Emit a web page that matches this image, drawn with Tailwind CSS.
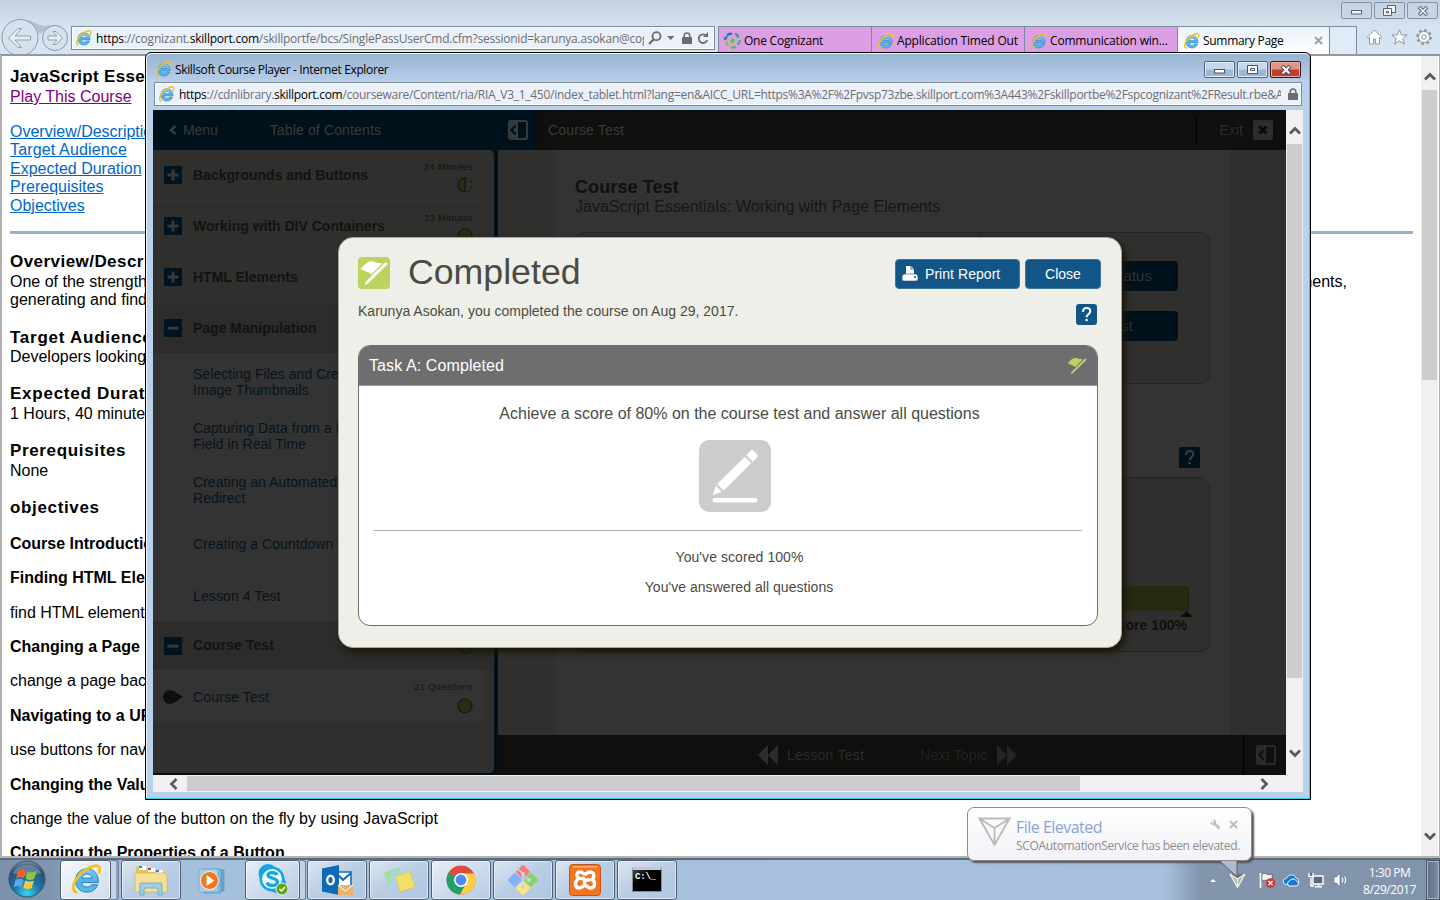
<!DOCTYPE html>
<html lang="en">
<head>
<meta charset="utf-8">
<title>Summary Page</title>
<script src="https://cdn.jsdelivr.net/npm/@tailwindcss/browser@4"></script>
</head>
<body class="overflow-hidden bg-white font-['Liberation_Sans',Arial,sans-serif]">
<svg class="absolute h-0 w-0">
  <defs>
    <linearGradient id="eblue" x1="0" y1="0" x2="0" y2="1"><stop offset="0" stop-color="#7fd0f5"/><stop offset=".5" stop-color="#4fb4ea"/><stop offset="1" stop-color="#5cb8ea"/></linearGradient>
    <symbol id="ie" viewBox="0 0 16 16">
      <path d="M14.6 9.9H5.700c.1 1.500 1.300 2.400 2.900 2.400 1 0 1.800-.4 2.300-1.200h3.300c-.9 2.500-3 3.900-5.700 3.900-3.700 0-6.100-2.500-6.100-6.100s2.500-6.300 6.100-6.300c3.800 0 6.200 2.800 6.100 7.300zM5.800 7.500h5.500c-.2-1.300-1.200-2.200-2.700-2.200S6 6.200 5.800 7.500z" fill="url(#eblue)" stroke="#2678b8" stroke-width=".5"/>
      <path d="M2.700 15C-.6 13.800 2 7.500 7 3.700 10.700.9 14.900-.3 15.300 2.300c.1.700 0 1.300-.3 2" fill="none" stroke="#f4c01c" stroke-width="1.500" stroke-linecap="round"/>
    </symbol>
    <symbol id="panel" viewBox="0 0 20 20">
      <path fill="currentColor" fill-rule="evenodd" d="M2.500 0h15A2.500 2.500 0 0 1 20 2.500v15a2.500 2.500 0 0 1-2.500 2.500h-15A2.500 2.500 0 0 1 0 17.500v-15A2.500 2.500 0 0 1 2.500 0zM10 2v16h8V2zM6.700 4.800 2 10l4.700 5.200 1.600-1.500L5 10l3.300-3.700z"/>
    </symbol>
    <symbol id="plus" viewBox="0 0 18 18"><rect width="18" height="18" rx="1" fill="#00131f"/><path d="M9 3.500v11M3.500 9h11" stroke="#343a3b" stroke-width="3"/></symbol>
    <symbol id="minus" viewBox="0 0 18 18"><rect width="18" height="18" rx="1" fill="#00131f"/><path d="M3.500 9.200h11" stroke="#343a3b" stroke-width="3"/></symbol>
    <symbol id="lock" viewBox="0 0 10 12"><path d="M2.200 6V3.800a2.800 2.800 0 0 1 5.600 0V6" fill="none" stroke="currentColor" stroke-width="1.500"/><rect y="5" width="10" height="7" rx=".8" fill="currentColor"/></symbol>
    <symbol id="flag" viewBox="0 0 32 32"><path d="M2.500 12C6.500 8.500 9.500 3.500 14.500 4.500c3 .6 6 2.300 10 1.700L13.500 17.500C10 14.500 6.500 14.500 2.500 12z" fill="currentColor"/><path d="M8.500 26 28 6.800" stroke="currentColor" stroke-width="3" stroke-linecap="round"/></symbol>
    <symbol id="qm" viewBox="0 0 21 21"><path d="M7 8c0-2.700 1.500-4 3.600-4s3.700 1.200 3.700 3.200c0 3-3.700 3.200-3.700 6.100" fill="none" stroke="currentColor" stroke-width="2"/><rect x="9.500" y="14.900" width="2.200" height="2.200" fill="currentColor"/></symbol>
    <symbol id="chev" viewBox="0 0 12 12"><path d="M1 8.500 6 3.500l5 5" fill="none" stroke="#5b5b5b" stroke-width="2.800"/></symbol>
  </defs>
</svg>

<div class="relative flex h-[900px] w-[1440px] flex-col overflow-hidden">

  <!-- browser chrome -->
  <header class="flex h-[54px] shrink-0 bg-linear-to-b from-[#c2cfdd] via-[#d5e2f0] to-[#d7e5f3]">
    <svg class="h-[54px] w-[70px] shrink-0" viewBox="0 0 70 54" fill="none">
      <path d="M27 20c8 1 12 8 24 5L40 34z" fill="#b4c0cc"/>
      <circle cx="20" cy="37.500" r="18" fill="#d5e2ee" stroke="#8a99a8"/>
      <circle cx="55" cy="38" r="12.500" fill="#d5e2ee" stroke="#8a99a8"/>
      <path d="m8.500 38 9.500-9.500 3.500 0-6.500 7.500h15.500v4H15l6.500 7.500H18z" stroke="#8f9dab" fill="#e6eef6"/>
      <path d="m62.500 38-6.500-6.500h-3l4 4.500H48v4h9l-4 4.500h3z" stroke="#8f9dab" fill="#e6eef6"/>
    </svg>
    <div class="mt-[26px] ml-px flex h-[24px] w-[644px] shrink-0 items-center border border-[#7c8b9c] bg-[#eaf1fb] pl-[3px] font-['Open_Sans',sans-serif] text-[12px] text-[#6e6e6e] outline-1 -outline-offset-2 outline-white">
      <svg class="h-4 w-[17px] shrink-0"><use href="#ie"/></svg>
      <div class="mt-px ml-1 w-[548px] shrink-0 overflow-hidden tracking-[-0.23px] whitespace-nowrap"><span class="text-black">https</span>://cognizant.<span class="text-black">skillport.com</span>/skillportfe/bcs/SinglePassUserCmd.cfm?sessionid=karunya.asokan@cog</div>
      <svg class="ml-[4px] h-[14px] w-[14px] shrink-0" viewBox="0 0 14 14" fill="none" stroke="#6c6c6c"><circle cx="8.500" cy="5.200" r="4" stroke-width="1.800"/><path d="M5.500 8.500 1 13" stroke-width="2.200"/></svg>
      <svg class="ml-[5px] h-1 w-2 shrink-0" viewBox="0 0 8 4"><path d="M0 0h7.500L3.700 4z" fill="#6c6c6c"/></svg>
      <svg class="ml-[7px] h-3 w-[10px] shrink-0 text-[#6c6c6c]"><use href="#lock"/></svg>
      <svg class="ml-[5px] h-[13px] w-[12px] shrink-0" viewBox="0 0 12 13" fill="none"><path d="M9.300 3.800A4.300 4.300 0 1 0 10.200 8" stroke="#6c6c6c" stroke-width="1.800"/><path d="M6 5h5V0z" fill="#6c6c6c"/></svg>
    </div>
    <nav class="mt-[26px] ml-[3px] flex h-[28px] shrink-0 border-t border-[#7c8b9c] font-['Open_Sans',sans-serif] text-[12px] tracking-[-0.24px] whitespace-nowrap text-black">
      <div class="flex w-[153px] items-center border-l border-[#7c8b9c] bg-[#dd9fe3] pl-[5px]">
        <svg class="h-[17px] w-[17px]" viewBox="0 0 17 17" fill="none" stroke-width="2.400"><circle cx="8.500" cy="8.800" r="2.400" fill="#6cc04a"/><path d="M3 3.500c2-2 4-2 5-1" stroke="#1b78a8"/><path d="M11 2c2 0 3 2 3 3.500" stroke="#28a29a"/><path d="M15.500 8c.5 2-1 4-2 4.500" stroke="#2fb59a"/><path d="M12 14.500c-2 1.500-4 1-5 .5" stroke="#5cb947"/><path d="M4.500 13.500c-2-1-2-3-1.500-4.500" stroke="#7ec350"/><path d="M1 8c0-2 1-3 2.500-3" stroke="#2384b4"/></svg>
        <span class="ml-[3px]">One Cognizant</span></div>
      <div class="flex w-[153px] items-center border-l border-[#7c8b9c] bg-[#dd9fe3] pl-[5px]"><svg class="h-4 w-[17px]"><use href="#ie"/></svg><span class="ml-[3px] tracking-[-0.18px]">Application Timed Out</span></div>
      <div class="flex w-[153px] items-center border-l border-[#7c8b9c] bg-[#dd9fe3] pl-[5px]"><svg class="h-4 w-[17px]"><use href="#ie"/></svg><span class="ml-[3px] tracking-[-0.18px]">Communication win...</span></div>
      <div class="flex w-[153px] items-center border-x border-[#7c8b9c] bg-linear-to-b from-[#eaf2fa] to-white pl-[5px]"><svg class="h-4 w-[17px]"><use href="#ie"/></svg><span class="ml-[3px] tracking-[-0.3px]">Summary Page</span>
        <svg class="mr-[6px] ml-auto h-[9px] w-[9px]" viewBox="0 0 9 9"><path d="m1 1 7 7M8 1 1 8" stroke="#a0a0a0" stroke-width="2"/></svg></div>
      <div class="w-[27px] border-r border-[#7c8b9c] bg-[#e0ebf8]"></div>
    </nav>
    <div class="flex grow flex-col">
      <div class="-ml-4 mt-[2px] flex h-[17px] gap-[2px]">
        <div class="flex w-[31px] items-center justify-center rounded-[2px] border border-[#8493a8] bg-[#c6d4e4]"><svg class="h-2 w-3" viewBox="0 0 12 8"><rect x=".5" y="3.500" width="10" height="3.500" fill="#f4f4f4" stroke="#5b6273"/></svg></div>
        <div class="flex w-[31px] items-center justify-center rounded-[2px] border border-[#8493a8] bg-[#c6d4e4]"><svg class="h-3 w-[13px]" viewBox="0 0 13 12" fill="#f4f4f4" stroke="#5b6273"><path d="M4.500.5h8v7h-8z"/><path d="M.5 3.500h8v7h-8z"/><path d="M3.500 6.500h2v1.500h-2z"/></svg></div>
        <div class="flex w-[31px] items-center justify-center rounded-[2px] border border-[#8493a8] bg-[#c6d4e4]"><svg class="h-[10px] w-3" viewBox="0 0 12 10"><path d="m2 1 8 8M10 1 2 9" stroke="#5b6273" stroke-width="3.600"/><path d="m2.500 1.500 7 7M9.500 1.500l-7 7" stroke="#f4f4f4" stroke-width="1.700"/></svg></div>
      </div>
      <div class="mt-[10px] ml-[9px] flex gap-[8px]">
        <svg class="h-4 w-[17px]" viewBox="0 0 17 16" fill="#fff" stroke="#8e969e"><path d="M1 8.500 8.500 1 16 8.500l-1 1-1.500-1v6.500h-4v-5h-2v5h-4V8.500L2 9.500z"/></svg>
        <svg class="h-4 w-[17px]" viewBox="0 0 17 16" fill="#fff" stroke="#8e969e"><path d="m8.500.8 2 5.200h5.700l-4.500 3.500 1.700 5.700-4.900-3.400-4.900 3.400 1.700-5.700L.8 6h5.700z"/></svg>
        <svg class="h-4 w-[16px]" viewBox="0 0 16 16" fill="none"><circle cx="8" cy="8" r="6.600" stroke="#8e969e" stroke-width="2.600" stroke-dasharray="2.600 2.580"/><circle cx="8" cy="8" r="5.500" fill="#fff" stroke="#8e969e"/><circle cx="8" cy="8" r="2.300" stroke="#8e969e"/></svg>
      </div>
    </div>
  </header>

  <!-- page behind the popup -->
  <main class="flex h-[804px] shrink-0 overflow-hidden border-t-2 border-b-2 border-l-2 border-t-[#8f99a4] border-b-[#b4b4b4] border-l-[#b0b0b0] bg-white">
    <div class="flex w-[1419px] flex-col pl-2 text-[16px] leading-[18px] whitespace-nowrap text-black *:shrink-0">
      <p class="mt-[12px] text-[17px] font-bold tracking-[0.3px]">JavaScript Essentials: Working with Page Elements</p>
      <a class="mt-[2px] text-[#800080] underline">Play This Course</a>
      <a class="mt-[17px] text-[#0066cc] underline">Overview/Description</a>
      <a class="tracking-[0.15px] text-[#0066cc] underline">Target Audience</a>
      <a class="mt-px text-[#0066cc] underline">Expected Duration</a>
      <a class="text-[#0066cc] underline">Prerequisites</a>
      <a class="mt-px text-[#0066cc] underline">Objectives</a>
      <div class="mt-[16px] h-[3px] w-[1403px] bg-[#8db3d9]"></div>
      <p class="mt-[19px] text-[17px] font-bold tracking-[0.45px]">Overview/Description</p>
      <div class="mt-[2px] flex w-[1337px] justify-between"><span>One of the strengths of JavaScript</span><span>page elements,</span></div>
      <p>generating and finding elements</p>
      <p class="mt-[20px] text-[17px] font-bold tracking-[0.75px]">Target Audience</p>
      <p class="mt-px">Developers looking to learn</p>
      <p class="mt-[19px] text-[17px] font-bold tracking-[0.75px]">Expected Duration</p>
      <p class="mt-[2px]">1 Hours, 40 minutes</p>
      <p class="mt-[19px] text-[17px] font-bold tracking-[0.65px]">Prerequisites</p>
      <p class="mt-[2px]">None</p>
      <p class="mt-[19px] text-[17px] font-bold tracking-[0.65px]">objectives</p>
      <p class="mt-[18px] font-bold">Course Introduction</p>
      <p class="mt-[16px] font-bold">Finding HTML Elements</p>
      <p class="mt-[17px]">find HTML elements</p>
      <p class="mt-[16px] font-bold">Changing a Page Background</p>
      <p class="mt-[16px]">change a page background</p>
      <p class="mt-[17px] font-bold">Navigating to a URL</p>
      <p class="mt-[16px]">use buttons for navigation</p>
      <p class="mt-[17px] font-bold">Changing the Value</p>
      <p class="mt-[16px]">change the value of the button on the fly by using JavaScript</p>
      <p class="mt-[16px] font-bold">Changing the Properties of a Button</p>
    </div>
    <div class="flex w-[17px] flex-col items-center bg-[#f0f0f0]">
      <svg class="mt-[15px] h-3 w-3"><use href="#chev"/></svg>
      <div class="mt-[7px] h-[290px] w-[15px] bg-[#cdcdcd]"></div>
      <svg class="mt-auto mb-[14px] h-3 w-3 rotate-180"><use href="#chev"/></svg>
    </div>
    <div class="w-[2px] border-r border-[#b0b0b0]"></div>
  </main>

  <!-- taskbar -->
  <footer class="flex h-[42px] shrink-0 items-stretch border-t-2 border-[#5c6b7d] bg-[linear-gradient(90deg,#7c90a9_0px,#7f95af_50px,#a6bfdb_120px,#a7c0dc_1165px,#8295ad_1200px,#8194ac_1440px)] *:shrink-0">
    <svg class="ml-[8px] h-[38px] w-[38px]" viewBox="0 0 38 38">
      <defs><radialGradient id="orb" cx=".5" cy=".9" r=".9"><stop offset="0" stop-color="#38d5f2"/><stop offset=".4" stop-color="#1878a8"/><stop offset=".8" stop-color="#2d4f72"/><stop offset="1" stop-color="#7e97ad"/></radialGradient></defs>
      <circle cx="19" cy="19" r="18" fill="url(#orb)" stroke="#35516c"/>
      <path d="M5 13a15 12 0 0 1 28 0q-14 6-28 0z" fill="#fff" opacity=".25"/>
      <path d="M10.500 10.500c3-1.500 5-1 7.500.3l-2 7.500c-2.500-1.500-5-1.500-8-.3z" fill="#f0602a"/><path d="M19.500 11.500c3 1.300 6 1 9-.4l-2.300 8c-3 1.300-5.800 1.200-8.600-.3z" fill="#8fc443"/><path d="M7.600 19.500c3-1.200 5.500-1 8 .4l-2 7.500c-2.500-1.300-5.400-1.400-8-.4z" fill="#5aa7e8"/><path d="M17.200 20.500c3 1.300 5.700 1.300 8.600.2l-2.100 7.600c-3 1.200-5.600 1-8.500-.3z" fill="#fbc934"/>
    </svg>
    <div class="ml-[14px] flex w-[51px] items-center justify-center rounded-[3px] border border-[#4c5b70] bg-linear-to-br from-[#f5f9fc] to-[#cfdded] shadow-[inset_0_0_0_1px_#ffffffcc]"><svg class="-mt-[2px] h-[30px] w-[30px]"><use href="#ie"/></svg></div>
    <div class="w-[8px] rounded-r-[3px] border border-l-0 border-[#6f819a] bg-[#c5d5e7] shadow-[inset_-3px_0_0_-1px_#8ea3bd]"></div>
    <div class="ml-[2px] flex w-[60px] items-center justify-center rounded-[3px] border border-[#4f6078] bg-linear-to-br from-[#dce6f1] via-[#bacde3] to-[#b0c7e0] shadow-[inset_0_0_0_1px_#ffffff80]">
      <svg class="h-[32px] w-[34px]" viewBox="0 0 34 32"><path d="M2 5V3h9l1 2h7l1 1h7l1 2h4v20H2z" fill="#e2c566"/><path d="M5 2h7v4H5zM14 4h7v4h-7zM22 6h7v4h-7z" fill="#fff"/><path d="M5 2h3v2H5z" fill="#36a13b"/><path d="M14 4h3v2h-3z" fill="#d23b30"/><path d="M22 6h3v2h-3z" fill="#3a85cf"/><path d="M1 9h30l2 2v16l-2 1H3L1 26z" fill="#f3df95" stroke="#d0b45c" stroke-width=".7"/><path d="M6 31V20q0-1 1-1h20q1 0 1 1v11h-4v-5q0-2-2-2H12q-2 0-2 2v5z" fill="#9bcfe9" stroke="#5d9fc4" stroke-width=".7"/></svg></div>
    <div class="flex w-[64px] items-center justify-center">
      <svg class="mt-[2px] h-[26px] w-[30px]" viewBox="0 0 30 26"><path d="M8 2h18v21H8z" fill="#6ba6cf" stroke="#4b8ebb" stroke-width=".6"/><path d="M6 1h17v24H6z" fill="#86bbde" stroke="#4b8ebb" stroke-width=".6"/><path d="M1 1h19v23H1z" fill="#a5cfe8" stroke="#5c9dc6" stroke-width=".6"/><circle cx="11.500" cy="12.500" r="9" fill="#f1771c" stroke="#fff" stroke-width=".8"/><path d="M8.500 7v11l8-5.500z" fill="#fff"/></svg></div>
    <div class="flex w-[55px] items-center justify-center rounded-[3px] border border-[#4f6078] bg-linear-to-br from-[#e6eef6] to-[#b6cbe2] shadow-[inset_0_0_0_1px_#ffffff80]">
      <svg class="h-[32px] w-[32px]" viewBox="0 0 32 32"><circle cx="11" cy="9.500" r="9.500" fill="#16a5e4"/><circle cx="20" cy="20" r="9" fill="#16a5e4"/><circle cx="15" cy="15" r="12.500" fill="#16a5e4"/><circle cx="15" cy="15" r="10" fill="#e9f6fd"/><path d="M20 11c-1-3-9-3.500-9 0 0 4 9.500 2.500 9.500 7 0 4.500-9.500 4.500-10.500.5" fill="none" stroke="#16a5e4" stroke-width="3.200"/><circle cx="25" cy="25" r="6" fill="#5aaa14" stroke="#e7f0f7"/><path d="m22.500 25 2 2 3.500-4" fill="none" stroke="#fff" stroke-width="1.500"/></svg></div>
    <div class="w-[6px] rounded-r-[3px] border border-l-0 border-[#6f819a] bg-[#c0d2e6]"></div>
    <div class="ml-px flex w-[60px] items-center justify-center rounded-[3px] border border-[#4f6078] bg-linear-to-br from-[#dce6f1] via-[#bacde3] to-[#b0c7e0] shadow-[inset_0_0_0_1px_#ffffff80]">
      <svg class="h-[32px] w-[32px]" viewBox="0 0 32 32"><path d="M14 8h16v14H14z" fill="#fff" stroke="#0b6ab8" stroke-width="1.500"/><path d="m17 11 5 5 8-7" fill="none" stroke="#0b6ab8" stroke-width="2"/><path d="M1 4.500 18 1v30L1 27.500z" fill="#0b6ab8"/><ellipse cx="9.500" cy="16" rx="3.300" ry="4.300" fill="none" stroke="#fff" stroke-width="2.400"/><path d="M17 21h15v10H17z" fill="#e9b36f"/><path d="m17 21 7.500 6 7.500-6" fill="none" stroke="#fff"/></svg></div>
    <div class="ml-[2px] flex w-[60px] items-center justify-center rounded-[3px] border border-[#4f6078] bg-linear-to-br from-[#dce6f1] via-[#bacde3] to-[#b0c7e0] shadow-[inset_0_0_0_1px_#ffffff80]">
      <svg class="h-[28px] w-[32px]" viewBox="0 0 32 28"><path d="m1 7 15-6 5 14-15 6z" fill="#a5dca0"/><path d="m9 6 14 1-1 16-15-2z" fill="#a9d3f3"/><path d="m12 10 15-4 5 15-15 5z" fill="#f3df67" stroke="#d9c24c" stroke-width=".6"/></svg></div>
    <div class="ml-[2px] flex w-[60px] items-center justify-center rounded-[3px] border border-[#4f6078] bg-linear-to-br from-[#e6eef6] to-[#b6cbe2] shadow-[inset_0_0_0_1px_#ffffff80]">
      <svg class="h-[30px] w-[30px]" viewBox="0 0 30 30"><circle cx="15" cy="15" r="14.500" fill="#dd4b3e"/><path d="M15 15 2.500 7.700A14.500 14.500 0 0 0 14 29.500l6-11z" fill="#1ea362"/><path d="M15 8.500h13a14.500 14.500 0 0 1-14 21l6-11z" fill="#ffcd46"/><circle cx="15" cy="15" r="7" fill="#fff"/><circle cx="15" cy="15" r="5.400" fill="#4c8bf5"/></svg></div>
    <div class="ml-[2px] flex w-[60px] items-center justify-center rounded-[3px] border border-[#4f6078] bg-linear-to-br from-[#dce6f1] via-[#bacde3] to-[#b0c7e0] shadow-[inset_0_0_0_1px_#ffffff80]">
      <svg class="h-[32px] w-[32px]" viewBox="0 0 32 32"><g transform="rotate(45 16 16)"><rect x="5" y="5" width="10.500" height="10.500" rx="1.500" fill="#f87a7a"/><rect x="16.500" y="5" width="10.500" height="10.500" rx="1.500" fill="#8bd25f"/><rect x="5" y="16.500" width="10.500" height="10.500" rx="1.500" fill="#7fb2ff"/><rect x="16.500" y="16.500" width="10.500" height="10.500" rx="1.500" fill="#ffe578"/></g><path d="m11 5 5 5v14M16 11l6 5" fill="none" stroke="#c5d6e8" stroke-width="1.600"/><circle cx="16" cy="23" r="2" fill="#c5d6e8"/><circle cx="22" cy="16" r="2" fill="#c5d6e8"/><circle cx="16" cy="10" r="2" fill="#c5d6e8"/></svg></div>
    <div class="ml-[2px] flex w-[60px] items-center justify-center rounded-[3px] border border-[#4f6078] bg-linear-to-br from-[#dce6f1] via-[#bacde3] to-[#b0c7e0] shadow-[inset_0_0_0_1px_#ffffff80]">
      <svg class="h-[32px] w-[32px]" viewBox="0 0 32 32"><rect x=".5" y=".5" width="31" height="31" rx="3" fill="#f37521" stroke="#c9550f"/><path d="M4 2h24v1.500H4z" fill="#fbb07a"/><path d="M16 14.500h-4c-5 0-5.500-6-1.500-6.500 3-.4 3.500 2 5.500 2s2.500-2.400 5.500-2c4 .5 4.500 6 1 7.500 4.500 1.500 4 8.500-1 8.500-3 0-3.500-2.500-5.500-2.500s-2.500 2.500-5.500 2.500c-5 0-5.500-7-1-8.500M20.500 16h-5v4" fill="none" stroke="#fff" stroke-width="3.400"/></svg></div>
    <div class="ml-[2px] flex w-[60px] items-center justify-center rounded-[3px] border border-[#4f6078] bg-linear-to-br from-[#dce6f1] via-[#bacde3] to-[#b0c7e0] shadow-[inset_0_0_0_1px_#ffffff80]">
      <div class="-mt-px flex h-[25px] w-[30px] flex-col border border-t-[3px] border-[#8b8b8b] border-t-[#bfc9d0] bg-linear-to-br from-[#444] to-black to-50% pt-[2px] pl-[2px] font-['Liberation_Mono',monospace] text-[9px] leading-[11px] font-bold tracking-[-0.2px] text-white">C:\_</div></div>

    <!-- tray -->
    <div class="ml-auto flex items-center">
      <svg class="h-[5px] w-[8px]" viewBox="0 0 8 5"><path d="M0 4.500 4 .5l4 4z" fill="#fff" stroke="#4a5a6c" stroke-width=".5"/></svg>
      <svg class="ml-[12px] h-[15px] w-[17px]" viewBox="0 0 17 15"><path d="M1 1h15l-7.500 13.500z" fill="#766f69"/><path d="M1 1 8.500 6 16 1 8.500 14.500zM8.500 6v8" fill="#b6b2ae" stroke="#f2f0ee" stroke-width="1.300"/></svg>
      <svg class="ml-[13px] h-4 w-[17px]" viewBox="0 0 17 16"><path d="M1.500 1v15" stroke="#fff" stroke-width="1.600"/><path d="M3 2c4-2 5 2 10 0v7C8 10 7 7 3 9z" fill="#f5f5f5" stroke="#3c4a5a" stroke-width=".6"/><circle cx="11.500" cy="11" r="4.800" fill="#d8352c"/><path d="m9.500 9 4 4m0-4-4 4" stroke="#fff" stroke-width="1.500"/></svg>
      <svg class="ml-[7px] h-[13px] w-[17px]" viewBox="0 0 17 13"><path d="M3 10.500a3 3 0 0 1 .5-6A5 5 0 0 1 13 4a3.500 3.500 0 0 1 1 6.500z" fill="#1479d4" stroke="#dcebf8"/><path d="M6 12a2.700 2.700 0 0 1 .5-5A4 4 0 0 1 13.500 7a2.600 2.600 0 0 1 0 5z" fill="#1479d4" stroke="#fff"/></svg>
      <svg class="ml-[8px] h-4 w-[16px]" viewBox="0 0 16 16" fill="#5a6b80" stroke="#fff" stroke-width="1.400"><path d="M5 4h10v8H5z"/><path d="M7 14.800h7M10.500 12v2.500M3 6v8h3" fill="none"/><path d="M1 1v3.500h4V1"/></svg>
      <svg class="ml-[9px] h-4 w-[14px]" viewBox="0 0 14 16"><path d="M1 5h2.500L7 1v14L3.500 11H1z" fill="#fff" stroke="#46566a" stroke-width=".5"/><path d="M9 5.500c1 1.600 1 3.400 0 5M11.500 4.500c1.500 2.300 1.500 4.700 0 7" fill="none" stroke="#fff" stroke-width="1.100"/></svg>
      <div class="mt-[2px] ml-[10px] w-[65px] text-center font-['Open_Sans',sans-serif] text-[12px] leading-[17px] tracking-[-0.45px] text-white">1:30 PM<br>8/29/2017</div>
    </div>
    <div class="ml-[4px] w-[14px] border border-[#4a596b] bg-linear-to-r from-[#5d6e84] to-[#8091a8] shadow-[inset_0_0_0_1px_#a5b4c6]"></div>
  </footer>

  <!-- popup window -->
  <div class="absolute top-[52px] left-[145px] flex h-[748px] w-[1166px] flex-col rounded-t-[6px] border border-black bg-[#b9d1ea] shadow-[inset_-1px_-1px_0_#35c8de,inset_1px_1px_0_#f2f7fc]">
    <div class="mx-px mt-px flex h-[28px] items-center rounded-t-[5px] bg-linear-to-b from-[#99b4d1] to-[#b7cfe9] pl-[8px] font-['Open_Sans',sans-serif] text-[12px] tracking-[-0.36px] text-black">
      <svg class="mt-[2px] h-4 w-[17px]"><use href="#ie"/></svg><span class="mt-[3px] ml-[3px]">Skillsoft Course Player - Internet Explorer</span>
      <div class="mt-[3px] mr-[8px] ml-auto flex h-[17px] gap-[2px]">
        <div class="flex w-[31px] items-center justify-center rounded-[2px] border border-[#53657e] bg-linear-to-b from-[#c5d7ea] from-45% to-[#9db7d3] to-55% shadow-[inset_0_0_0_1px_#dfeaf5]"><svg class="h-2 w-3" viewBox="0 0 12 8"><rect x=".5" y="3.500" width="10" height="3.500" fill="#fff" stroke="#4b4f63"/></svg></div>
        <div class="flex w-[31px] items-center justify-center rounded-[2px] border border-[#53657e] bg-linear-to-b from-[#c5d7ea] from-45% to-[#9db7d3] to-55% shadow-[inset_0_0_0_1px_#dfeaf5]"><svg class="h-[9px] w-[11px]" viewBox="0 0 11 9" fill="#fff" stroke="#4b4f63"><path d="M.5.5h10v8H.5z"/><path d="M3.500 3.500h4v2h-4z"/></svg></div>
        <div class="flex w-[31px] items-center justify-center rounded-[2px] border border-[#43141b] bg-linear-to-b from-[#e0958a] from-45% to-[#bd3f2c] to-55% shadow-[inset_0_0_0_1px_#eab0a5]"><svg class="h-[10px] w-3" viewBox="0 0 12 10"><path d="m2 1 8 8M10 1 2 9" stroke="#4b4558" stroke-width="4"/><path d="m2.500 1.500 7 7M9.500 1.500l-7 7" stroke="#fff" stroke-width="2.200"/></svg></div>
      </div>
    </div>
    <div class="ml-[8px] flex h-[24px] w-[1148px] shrink-0 items-center border border-[#7c8b9c] bg-[#eaf1fb] pl-[3px] font-['Open_Sans',sans-serif] text-[12px] text-[#6e6e6e] outline-1 -outline-offset-2 outline-white">
      <svg class="h-4 w-[17px] shrink-0"><use href="#ie"/></svg>
      <div class="mt-[2px] ml-1 w-[1102px] shrink-0 overflow-hidden tracking-[-0.285px] whitespace-nowrap"><span class="text-black">https</span>://cdnlibrary.<span class="text-black">skillport.com</span>/courseware/Content/ria/RIA_V3_1_450/index_tablet.html?lang=en&amp;AICC_URL=https%3A%2F%2Fpvsp73zbe.skillport.com%3A443%2Fskillportbe%2Fspcognizant%2FResult.rbe&amp;A</div>
      <svg class="ml-[7px] h-3 w-[10px] shrink-0 text-[#6c6c6c]"><use href="#lock"/></svg>
    </div>

    <div class="mt-[4px] ml-[7px] flex h-[665px] w-[1150px] shrink-0">
      <!-- course application, dimmed -->
      <div class="flex w-[1133px] flex-col bg-[#0f0f0d] text-[14px] text-[#3a3a3a]">
        <div class="flex h-[40px] shrink-0 items-center">
          <div class="flex h-full w-[385px] items-center bg-[#00111b] pl-[16px]">
            <svg class="h-[10px] w-[8px]" viewBox="0 0 8 10"><path d="M6.500 1 2 5l4.500 4" fill="none" stroke="#3b4042" stroke-width="2.400"/></svg>
            <span class="ml-[6px] tracking-[-0.1px]">Menu</span><span class="ml-[52px] tracking-[0.15px]">Table of Contents</span>
            <svg class="mr-[10px] ml-auto h-5 w-5 text-[#353a3b]"><use href="#panel"/></svg>
          </div>
          <span class="ml-[10px] tracking-[0.15px]">Course Test</span>
          <div class="mr-[13px] ml-auto flex h-[30px] items-center border-l border-black pl-[22px] text-[14px] text-[#2c2c2c]"><span class="tracking-[0.1px]">Exit</span>
            <svg class="ml-[10px] h-5 w-5" viewBox="0 0 20 20"><rect width="20" height="20" rx="2" fill="#2d2d2d"/><path d="m6.500 6.500 7 7m0-7-7 7" stroke="#0a0a0a" stroke-width="3"/></svg></div>
        </div>
        <div class="flex h-[625px]">
          <!-- contents sidebar -->
          <div class="w-[345px] bg-[#00111b] pr-[4px] pb-[2px]">
            <div class="h-full rounded-r-[5px] bg-[#2f2f2d] text-[14px]">
              <div class="flex h-[51px] w-[330px] items-center border-b border-[#353533] pl-[11px] font-bold text-[#131311]"><svg class="h-[18px] w-[18px]"><use href="#plus"/></svg><span class="ml-[11px]">Backgrounds and Buttons</span>
                <div class="mt-[2px] mr-[10px] ml-auto flex flex-col items-end gap-[3px] text-[9.500px] leading-[14px] font-normal tracking-[0.25px]">24 Minutes<svg class="h-4 w-4" viewBox="0 0 16 16"><path d="M8 1a7 7 0 0 0 0 14z" fill="#262f10" stroke="#10100e"/><path d="M8 1a7 7 0 0 1 0 14" fill="none" stroke="#151513" stroke-dasharray="3 2.500"/></svg></div></div>
              <div class="flex h-[51px] w-[330px] items-center border-b border-[#353533] pl-[11px] font-bold text-[#131311]"><svg class="h-[18px] w-[18px]"><use href="#plus"/></svg><span class="ml-[11px]">Working with DIV Containers</span>
                <div class="mt-[2px] mr-[10px] ml-auto flex flex-col items-end gap-[3px] text-[9.500px] leading-[14px] font-normal tracking-[0.25px]">23 Minutes<svg class="h-4 w-4" viewBox="0 0 16 16"><circle cx="8" cy="8" r="7" fill="#262f10" stroke="#10100e"/></svg></div></div>
              <div class="flex h-[51px] w-[330px] items-center border-b border-[#353533] pl-[11px] font-bold text-[#131311]"><svg class="h-[18px] w-[18px]"><use href="#plus"/></svg><span class="ml-[11px]">HTML Elements</span></div>
              <div class="flex h-[51px] w-[341px] items-center border-b border-[#353533] bg-[#2c2c2a] pl-[11px] font-bold text-[#131311]"><svg class="h-[18px] w-[18px]"><use href="#minus"/></svg><span class="ml-[11px]">Page Manipulation</span></div>
              <div class="flex h-[267px] w-[341px] flex-col bg-[#333] pl-[40px] leading-[16px] tracking-[0.05px] text-[#06131e]">
                <p class="mt-[12px]">Selecting Files and Creating<br>Image Thumbnails</p>
                <p class="mt-[22px]">Capturing Data from a Form<br>Field in Real Time</p>
                <p class="mt-[22px]">Creating an Automated<br>Redirect</p>
                <p class="mt-[30px]">Creating a Countdown Timer</p>
                <p class="mt-[36px] tracking-[0.12px]">Lesson 4 Test</p>
              </div>
              <div class="flex h-[49px] w-[341px] items-center bg-[#2c2c2a] pl-[11px] font-bold text-[#131311]"><svg class="h-[18px] w-[18px]"><use href="#minus"/></svg><span class="ml-[11px] tracking-[0.1px]">Course Test</span><svg class="mt-[2px] mr-[20px] ml-auto h-4 w-4" viewBox="0 0 16 16"><circle cx="8" cy="8" r="7" fill="#262f10" stroke="#10100e"/></svg></div>
              <div class="flex h-[52px] w-[330px] items-center border-t border-[#373737] bg-[#333] pl-[10px] text-[#06131e]"><svg class="h-[14px] w-[20px]" viewBox="0 0 20 14"><path d="M7 0a7 7 0 1 0 0 14c4 0 6-3 13-7-7-4-9-7-13-7z" fill="#0e0e0e"/></svg><span class="mt-px ml-[10px] tracking-[0.15px]">Course Test</span>
                <div class="mr-[10px] ml-auto flex flex-col items-end gap-[4px] text-[9.500px] leading-[15px] tracking-[0.25px] text-[#151513]">21 Questions<svg class="h-4 w-4" viewBox="0 0 16 16"><circle cx="8" cy="8" r="7" fill="#262f10" stroke="#10100e"/></svg></div></div>
            </div>
          </div>
          <!-- test area -->
          <div class="flex w-[788px] flex-col">
            <div class="flex h-[585px] justify-center bg-[#2f2f2d] pl-px">
              <div class="w-[675px] bg-[#333] px-[20px] pt-[27px]">
                <p class="text-[18px] leading-[20px] font-bold tracking-[0.1px] text-[#10100e]">Course Test</p>
                <p class="text-[16px] leading-[19px] text-[#171715]">JavaScript Essentials: Working with Page Elements</p>
                <div class="mt-[16px] flex h-[152px] w-[635px] justify-end rounded-[10px] border border-[#242422] bg-[#2f2f2d]">
                  <div class="h-full w-px bg-[#242422]"></div>
                  <div class="mr-[31px] ml-[48px] flex w-[149px] flex-col gap-[20px] pt-[28px] text-[15px] text-[#2c3335]">
                    <div class="flex h-[30px] items-center justify-center rounded-[4px] bg-[#00111b] pl-[18px]">View Status</div>
                    <div class="flex h-[30px] items-center justify-center rounded-[4px] bg-[#00111b] pr-[5px]">Take Test</div>
                  </div>
                </div>
                <div class="mt-[63px] mr-[10px] ml-auto h-[21px] w-[21px] rounded-[2px] bg-[#00111b] text-[#3a4042]"><svg class="h-[21px] w-[21px]"><use href="#qm"/></svg></div>
                <div class="mt-[9px] flex h-[175px] w-[635px] flex-col items-end rounded-[10px] border border-[#242422] bg-[#2f2f2d] pr-[20px]">
                  <div class="mt-[108px] h-[25px] w-[400px] shrink-0 rounded-[3px] border-r border-[#1d220c] bg-[#252a13]"></div>
                  <svg class="-mr-[4px] h-[6px] w-[13px] shrink-0" viewBox="0 0 13 6"><path d="M0 6 6.500 0 13 6z" fill="#0c0c0c"/></svg>
                  <span class="mr-[2px] text-[14px] leading-[17px] font-bold text-[#10100e]">Score 100%</span>
                </div>
              </div>
            </div>
            <div class="flex h-[40px] items-center pl-[260px] text-[14px] text-[#2c2c2c]">
              <svg class="h-5 w-5" viewBox="0 0 20 20"><path d="M10 0v20L0 10zM20 0v20L10 10z" fill="#2c2c2c"/></svg>
              <span class="ml-[9px] tracking-[0.25px]">Lesson Test</span><span class="ml-[56px] tracking-[0.2px] text-[#222]">Next Topic</span>
              <svg class="ml-[10px] h-5 w-5" viewBox="0 0 20 20"><path d="M0 0v20l10-10zM10 0v20l10-10z" fill="#242424"/></svg>
              <div class="mr-[10px] ml-auto flex h-full items-center border-l border-black pl-[12px]"><svg class="h-5 w-5 text-[#2b2b2b]"><use href="#panel"/></svg></div>
            </div>
          </div>
        </div>
      </div>
      <div class="flex w-[17px] flex-col items-center bg-[#f0f0f0]">
        <svg class="mt-[15px] h-3 w-3"><use href="#chev"/></svg>
        <div class="mt-[7px] h-[534px] w-[15px] bg-[#cdcdcd]"></div>
        <svg class="mt-auto mb-[16px] h-3 w-3 rotate-180"><use href="#chev"/></svg>
      </div>
    </div>
    <div class="ml-[7px] flex h-[17px] w-[1150px] shrink-0 items-center bg-[#f0f0f0] pl-[15px]">
      <svg class="h-3 w-3 -rotate-90"><use href="#chev"/></svg><div class="ml-[7px] h-[15px] w-[893px] bg-[#cdcdcd]"></div><svg class="mr-[33px] ml-auto h-3 w-3 rotate-90"><use href="#chev"/></svg>
    </div>
  </div>

  <!-- completion dialog -->
  <div class="absolute top-[237px] left-[338px] flex h-[411px] w-[784px] flex-col rounded-[15px] border border-[#a5a69f] bg-[#eeefe9] pr-[20px] pl-[19px] text-[#4b4b43] shadow-[3px_4px_6px_#1c1408]">
    <div class="mt-[20px] flex h-[31px] items-center">
      <div class="-mt-px h-[32px] w-[32px] rounded-[4px] bg-[#bcd35f] text-white"><svg class="h-8 w-8"><use href="#flag"/></svg></div>
      <h1 class="-mt-[3px] ml-[18px] text-[35.700px] leading-[32px]">Completed</h1>
      <div class="ml-auto flex h-[30px] w-[125px] items-center rounded-[4px] border border-[#3f76a0] bg-[#125687] text-[14px] text-white"><svg class="ml-[6px] h-4 w-4" viewBox="0 0 16 16" fill="#fff"><path d="M4 0h5l3 3v5H4z"/><path d="M9 0v3h3" fill="none" stroke="#125687" stroke-width=".8"/><path d="M2 8h12q2 1 2 3v2q0 2-2 2H2q-2 0-2-2v-2q0-2 2-3z" stroke="#125687" stroke-width=".6"/><circle cx="13" cy="11" r="1" fill="#125687"/></svg><span class="mt-px ml-[7px] tracking-[0.05px]">Print Report</span></div>
      <div class="ml-[5px] flex h-[30px] w-[76px] items-center justify-center rounded-[4px] border border-[#3f76a0] bg-[#125687] pt-px text-[14px] text-white">Close</div>
    </div>
    <div class="mt-[11px] flex h-[25px] items-center justify-between text-[14px]"><p class="-mt-[2px] tracking-[0.01px]">Karunya Asokan, you completed the course on Aug 29, 2017.</p>
      <div class="mt-[4px] mr-[4px] h-[21px] w-[21px] rounded-[3px] bg-[#125687] text-white"><svg class="h-[21px] w-[21px]"><use href="#qm"/></svg></div></div>
    <div class="mt-[20px] flex h-[281px] w-[740px] flex-col items-center overflow-hidden rounded-[12px] border border-[#6e6e6e] bg-white">
      <div class="flex h-[40px] w-full shrink-0 items-center justify-between border-b border-[#9a9a9a] bg-[#6e6e6e] pr-[9px] pl-[10px] text-[16px] text-white"><span class="tracking-[0.1px]">Task A: Completed</span><svg class="h-[22px] w-[22px] text-[#bcd35f]"><use href="#flag"/></svg></div>
      <p class="mt-[19px] pl-[23px] text-[16px] leading-[18px]">Achieve a score of 80% on the course test and answer all questions</p>
      <svg class="mt-[17px] ml-[14px] h-[72px] w-[72px] shrink-0" viewBox="0 0 72 72"><rect width="72" height="72" rx="10" fill="#ccc"/><g fill="#fff"><path d="m45.800 16.800 6.400 6.400L24.800 50.500 18.200 44z"/><path d="m47.300 15.200 4-4.200q1.800-1.600 3.800.2l2.600 2.600q1.800 2 .2 3.800l-4 4.200z"/><path d="m17 46 5.500 5.800-9 3.500z"/><rect x="13.500" y="58" width="45" height="4.500" rx="2.200"/></g></svg>
      <div class="mt-[18px] mr-[2px] h-px w-[709px] shrink-0 bg-[#b5b5a8]"></div>
      <p class="mt-[17px] pl-[23px] text-[14px] leading-[18px] tracking-[0.07px]">You've scored 100%</p>
      <p class="mt-[12px] pl-[22px] text-[14px] leading-[18px] tracking-[0.04px]">You've answered all questions</p>
    </div>
  </div>

  <!-- tray balloon -->
  <div class="absolute top-[807px] left-[967px] flex h-[54px] w-[285px] rounded-[7px] border border-[#8b8b8b] bg-linear-to-b from-white to-[#f2f2f8] font-['Open_Sans',sans-serif] shadow-[2px_2px_2px_#555]">
    <svg class="mt-[9px] ml-[10px] h-[30px] w-[33px] shrink-0" viewBox="0 0 33 30" fill="none" stroke="#b9b9b5" stroke-width="1.800"><path d="M1.500 1.500h30L16.500 28zM1.500 1.500l15 9.500 15-9.500M16.500 11v17"/></svg>
    <div class="ml-[5px] whitespace-nowrap"><p class="mt-[9px] text-[16px] leading-[21px] tracking-[-0.52px] text-[#8aa2d8]">File Elevated</p><p class="text-[12px] leading-[15px] tracking-[-0.34px] text-[#8d8d8d]">SCOAutomationService has been elevated.</p></div>
    <svg class="absolute top-[11px] left-[242px] h-[11px] w-[11px]" viewBox="0 0 11 11"><path d="M3.500 3.500 9.500 9.500" stroke="#bdbdbd" stroke-width="2.800"/><path d="M1 2.500 3 4.500 4.500 3 2.500 1C5 .3 6.500 2 6 4S3 6.500 1.500 5.500 0 3.500 1 2.500z" fill="#bdbdbd"/></svg>
    <svg class="absolute top-[12px] left-[261px] h-[9px] w-[9px]" viewBox="0 0 9 9"><path d="m1 1 7 7M8 1 1 8" stroke="#bdbdbd" stroke-width="2"/></svg>
    <svg class="absolute top-[52px] left-[251px] h-[18px] w-[22px]" viewBox="0 0 22 18"><path d="M1 1 18 17V1z" fill="#b0bccd"/><path d="M1 1 18 17V1" fill="none" stroke="#56616f"/></svg>
  </div>
</div>
</body>
</html>
